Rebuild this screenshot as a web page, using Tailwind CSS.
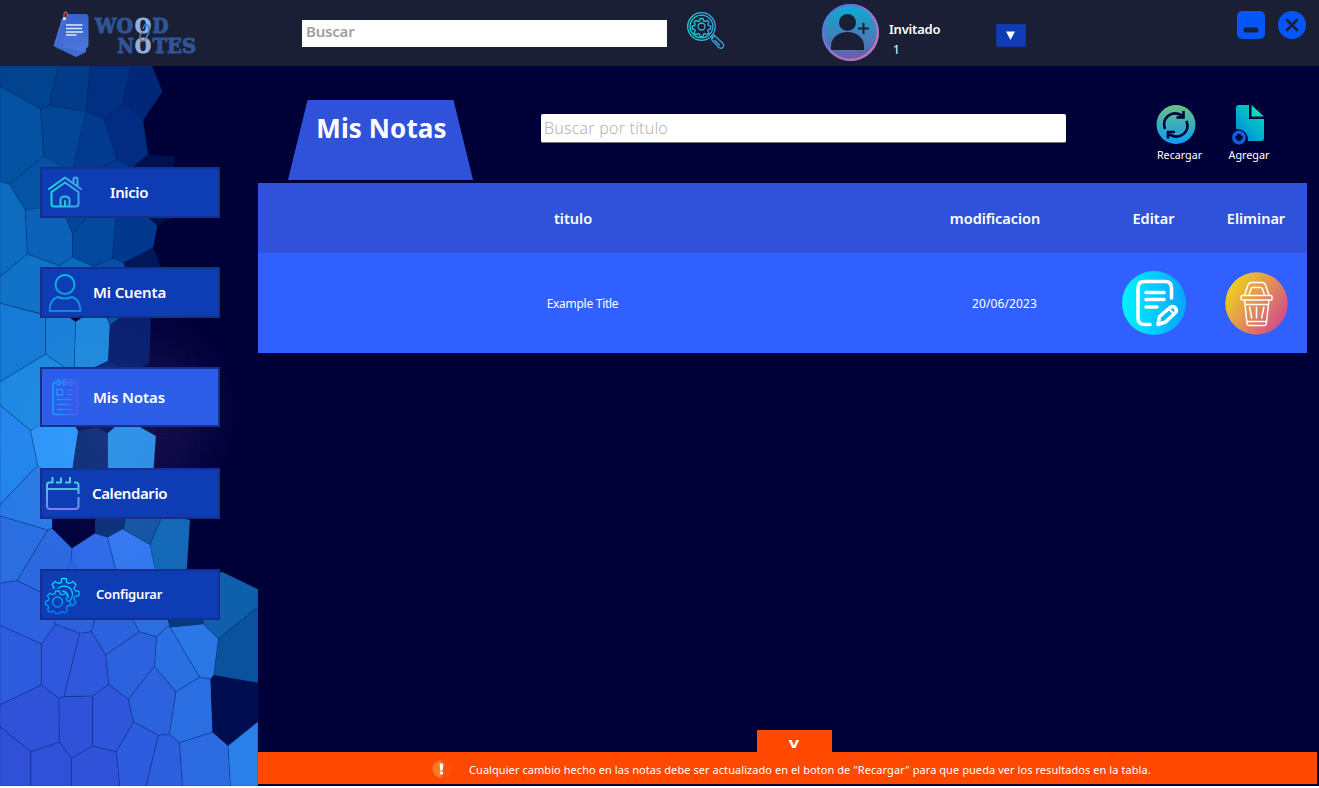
<!DOCTYPE html>
<html lang="es">
<head>
<meta charset="utf-8">
<title>Wood Notes</title>
<script src="https://cdn.jsdelivr.net/npm/@tailwindcss/browser@4"></script>
</head>
<body class="h-[788px] w-[1319px] overflow-hidden bg-white font-['Noto_Sans','Open_Sans',sans-serif] text-white">
<div class="flex h-[786px] w-full flex-col bg-[#000038]">

<header class="flex h-[66px] shrink-0 items-start bg-[#1a1f36]">
  <svg class="ml-[50px] mt-[8px] h-[50px] w-[150px]" viewBox="0 0 150 50">
    <defs><linearGradient id="pg" x1="0" y1="0" x2="0" y2="1"><stop offset="0" stop-color="#3563cc"/><stop offset="1" stop-color="#4b76dc"/></linearGradient></defs>
    <path d="M12 10 L3.500 38 L26 49 L36 44 L37 9Z" fill="#4470d8"/>
    <path d="M13 16 L7 40 L28 47M15 16 L11 40 L31 45" stroke="#3560c0" stroke-width=".7" fill="none"/>
    <path d="M17 6h18q3.500 0 3.500 3v28q0 3-3 3l-3 3.500-20-6z" fill="url(#pg)"/>
    <path d="M16 17h16.500M16 20.500h16M16 24h17M16 27h10.500" stroke="#dfe6f5" stroke-width="1.500"/>
    <rect x="13" y="9" width="3" height="3" fill="#d5dcec"/><path d="M14 10V6q1-3 3-1v4" stroke="#e06068" stroke-width="1.200" fill="none"/>
    <g font-family="'DejaVu Serif',serif" font-weight="700" font-size="21" fill="#2f5596" stroke="#2f5596" stroke-width="1.100">
      <text x="45" y="24.500" textLength="38" lengthAdjust="spacingAndGlyphs">WO</text>
      <text x="85" y="24.500" textLength="16" lengthAdjust="spacingAndGlyphs" fill="#94b0e0" stroke="#94b0e0">O</text>
      <text x="102.500" y="24.500" textLength="16" lengthAdjust="spacingAndGlyphs">D</text>
      <text x="67.500" y="44.800" textLength="16.500" lengthAdjust="spacingAndGlyphs">N</text>
      <text x="85" y="44.800" textLength="16" lengthAdjust="spacingAndGlyphs" fill="#94b0e0" stroke="#94b0e0">O</text>
      <text x="102.500" y="44.800" textLength="43.500" lengthAdjust="spacingAndGlyphs">TES</text>
    </g>
    <path d="M93 21q1-5 4-4t2 6-3 5" stroke="#2085dc" stroke-width="1.700" fill="none"/>
    <path d="M93 24q-3 1-3 5t3 4 4-5" stroke="#76808f" stroke-width="1.500" fill="none"/>
  </svg>
  <div class="ml-[102px] mt-5 h-[27px] w-[365px] bg-white pl-1 text-[15px] leading-[23px] font-semibold tracking-[-0.2px] text-[#a0a0a0]">Buscar</div>
  <svg class="ml-5 mt-[11px] h-[39px] w-[39px]" viewBox="0 0 39 39" fill="none">
    <defs><linearGradient id="mg" gradientUnits="userSpaceOnUse" x1="0" y1="0" x2="39" y2="0"><stop offset="0" stop-color="#16d4d4"/><stop offset="1" stop-color="#4595e4"/></linearGradient></defs>
    <g stroke="url(#mg)" stroke-width="1.300">
      <circle cx="14.500" cy="15.500" r="13.800"/><circle cx="14.500" cy="15.500" r="11.400"/><circle cx="14.500" cy="15.500" r="3.500"/>
      <path d="M13 7.500h3l.5 2.200 1.500.7 2-1.200 2 2-1.200 2 .6 1.300 2.300.5v3l-2.300.5-.6 1.300 1.200 2-2 2-2-1.200-1.500.7-.5 2.200h-3l-.5-2.200-1.500-.7-2 1.200-2-2 1.200-2-.6-1.300-2.300-.5v-3l2.300-.5.6-1.300-1.200-2 2-2 2 1.200 1.500-.7z"/>
      <path d="M24 25l2.500 2.500M26 23l2.500 2.500M28.500 25.500l7.500 7q1.500 2.300-.3 4t-4-.2l-7-7.600q-.2-2 1.300-2.800t2.500-.4zM27.500 29l5.500 5.500"/>
    </g>
  </svg>
  <svg class="ml-[95px] mt-[3px] h-[59px] w-[59px]" viewBox="0 0 59 59">
    <defs><linearGradient id="av" x1="0" y1="0" x2="0" y2="1"><stop offset="0" stop-color="#0aaed0"/><stop offset="1" stop-color="#6a5cab"/></linearGradient>
    <linearGradient id="ar" x1="0" y1="0" x2="1" y2="1"><stop offset="0" stop-color="#1ba0da"/><stop offset=".2" stop-color="#5f70e0"/><stop offset=".6" stop-color="#b66ac8"/><stop offset="1" stop-color="#f268b8"/></linearGradient></defs>
    <circle cx="29.500" cy="29.500" r="28.500" fill="#0ba8d0"/><circle cx="29.500" cy="29.500" r="27.300" fill="url(#av)" stroke="url(#ar)" stroke-width="2.200"/>
    <g fill="#1a1f36"><circle cx="26.500" cy="19.500" r="8.500"/><path d="M10 47V43a16.500 14 0 0 1 33 0v4z"/><path d="M41.500 20h2v4.500H48v2h-4.500V31h-2v-4.500H37v-2h4.500z"/></g>
  </svg>
  <div class="ml-[9px] mt-5 flex w-[107px] flex-col">
    <span class="text-[13px] leading-[18px] font-semibold tracking-[-0.2px]">Invitado</span>
    <span class="mt-[3px] pl-1 text-[12px] leading-[17px]">1</span>
  </div>
  <div class="mt-6 flex h-[23px] w-[30px] items-center justify-center border border-[#14359a] bg-[#0e3cb4] pr-px"><svg class="size-[9px]" viewBox="0 0 9 9"><path d="M0 .5h9L4.500 9z" fill="#fff"/></svg></div>
  <svg class="ml-[210px] mt-[10px] h-[30px] w-[30px]" viewBox="0 0 30 30"><rect x="1" y="1" width="28" height="28" rx="5" fill="#0556f6"/><rect x="7.500" y="17.500" width="15" height="5" rx="2.500" fill="#1a1f36"/></svg>
  <svg class="ml-[11px] mt-[10px] h-[30px] w-[30px]" viewBox="0 0 30 30"><circle cx="15" cy="15" r="14" fill="#0556f6"/><path d="M10 10l10 10M20 10L10 20" stroke="#1a1f36" stroke-width="2.600" stroke-linecap="round"/></svg>
</header>

<div class="flex h-[720px]">
  <aside class="relative h-[720px] w-[258px] shrink-0">
    <!-- mosaic backdrop, drawn on a 3x grid -->
    <svg class="absolute left-0 top-0 h-[720px] w-[330px]" viewBox="0 198 990 2160">
      <defs>
        <radialGradient id="glow"><stop offset="0" stop-color="#120a4a"/><stop offset=".45" stop-color="#0a0644"/><stop offset="1" stop-color="#000038" stop-opacity="0"/></radialGradient>
        <radialGradient id="lt"><stop offset="0" stop-color="#fff" stop-opacity=".04"/><stop offset="1" stop-color="#fff" stop-opacity="0"/></radialGradient>
      </defs>
      <ellipse cx="480" cy="1240" rx="290" ry="380" fill="url(#glow)"/>
      <path d="M468 1308L580 1306 615 1385M550 980L570 1101M475 1275v33" stroke="#080335" stroke-width="2" fill="none"/>
      <path fill="#2c68e0" d="M190 1670H240V1730H190z"/>
      <g stroke="#002868" stroke-opacity=".28" stroke-width="3" stroke-linejoin="round">
        <path fill="#02438f" d="M0 198H175L148 316 122 327 0 259z"/>
        <path fill="#023b8a" d="M175 198H271L258 335 148 316z"/>
        <path fill="#012f82" d="M271 198H393L369 308 312 357 258 335z"/>
        <path fill="#002778" d="M393 198H456L487 275 429 361 369 308z"/>
        <path fill="#0453a3" d="M0 259L122 327 131 468 28 553 0 545z"/>
        <path fill="#034696" d="M122 327L148 316 258 335 219 510 200 520 131 468z"/>
        <path fill="#023a90" d="M258 335L312 357 351 478 305 503 250 530 215 520z"/>
        <path fill="#012c82" d="M312 357L369 308 429 361 444 464 395 505 351 478z"/>
        <path fill="#00104e" stroke="none" d="M395 505L444 464 522 468V650L472 677 445 652z"/>
        <path fill="#0453a5" d="M28 553L131 468 215 520 200 620 76 630z"/>
        <path fill="#013890" d="M351 478L395 505 420 600 305 503z"/>
        <path fill="#0d6bc0" d="M0 545L28 553 76 630 82 762 0 831z"/>
        <path fill="#0c62b8" d="M76 630L185 615 218 704V771L178 797 82 762z"/>
        <path fill="#04479a" d="M190 640H270L218 704z"/>
        <path fill="#034a9e" d="M270 640H349L337 775 280 800 218 771V704z"/>
        <path fill="#02398f" d="M349 640H430L472 677 459 743 371 788 337 775z"/>
        <path fill="#00185a" stroke="none" d="M459 743L490 820H375L371 788z"/>
        <path fill="#1173c8" d="M0 831L82 762 178 797 180 850 130 943 0 910z"/>
        <path fill="#0a6abf" d="M178 797L218 771 280 800 270 850H180z"/>
        <path fill="#0850a5" d="M280 800L337 775 371 788 380 830H280z"/>
        <path fill="#157bd6" d="M0 910L120 941 137 950V1063L0 1145z"/>
        <path fill="#1a80d8" d="M137 940L205 950 227 965 223 1101 205 1110 137 1063z"/>
        <path fill="#1f88dd" d="M227 965L250 950H320L330 975 325 1082 270 1110 223 1101z"/>
        <path fill="#0a55a8" d="M320 940H380L330 975z"/>
        <path fill="#0a2070" stroke="none" d="M363 950H453L448 1090 410 1110H360L325 1082 330 975z"/>
        <path fill="#08287a" stroke="none" d="M275 1106L325 1082 370 1106z"/>
        <path fill="#1d88e2" d="M0 1145L137 1063 205 1110 200 1260 92 1292 0 1215z"/>
        <path fill="#2285ec" d="M0 1215L92 1292 113 1396 0 1514z"/>
        <path fill="#2c95fa" d="M92 1292L130 1270H220L235 1293 216 1420H130L113 1396z"/>
        <path fill="#08155a" stroke="none" d="M220 1270H350L323 1300 290 1281 235 1293z"/>
        <path fill="#0d2c78" stroke="none" d="M235 1293L290 1281 323 1300V1420H216z"/>
        <path fill="#2b8ee5" d="M323 1300L350 1275H410L468 1308 460 1420H323z"/>
        <path fill="#287ae6" d="M0 1514L113 1396 160 1440 157 1585 143 1590 0 1548z"/>
        <path fill="#2a6ee2" d="M0 1548L143 1590 51 1742 0 1750z"/>
        <path fill="#2c68e0" d="M143 1590L157 1585 216 1645 214 1682 190 1730 120 1775 51 1742z"/>
        <path fill="#00003c" stroke="none" d="M157 1540H285V1600L217 1644 157 1586z"/>
        <path fill="#0c2f7a" stroke="none" d="M285 1540H375L370 1588 323 1612 285 1600z"/>
        <path fill="#1555a5" d="M378 1540H490L450 1634 370 1588z"/>
        <path fill="#1468b8" d="M490 1540L570 1560 560 1720H466L450 1634z"/>
        <path fill="#2e6ae8" d="M216 1645L285 1600 323 1612 350 1720H240L214 1682z"/>
        <path fill="#3478f0" d="M323 1612L368 1587 450 1634 468 1720H350z"/>
        <path fill="#2c62e0" d="M0 1750L51 1742 120 1775 167 1873 124 1932 0 1876z"/>
        <path fill="#2d62de" d="M167 1873L150 1840H290L274 1895 239 1900z"/>
        <path fill="#2d62de" d="M290 1840H390L418 1895 317 1965 274 1895z"/>
        <path fill="#2b6ee2" d="M390 1840H500L510 1882 500 1880 470 1911 418 1895z"/>
        <path fill="#063a80" d="M500 1840H630L610 1872 510 1882z"/>
        <path fill="#0f60ac" d="M667 1716L774 1768V1821L655 1917 610 1872 620 1720z"/>
        <path fill="#0a529e" d="M774 1821V2049L641 2026 655 1917z"/>
        <path fill="#2a78e5" d="M510 1882L610 1872 655 1917 641 2026 632 2037 599 2032z"/>
        <path fill="#2a70e2" d="M500 1880L510 1882 599 2032 528 2075 463 1999 470 1911z"/>
        <path fill="#2c62de" d="M418 1895L470 1911 463 1999 385 2098 326 2053 317 1965z"/>
        <path fill="#2f58dc" d="M167 1873L239 1900 192 2090 177 2095 124 2055V1932z"/>
        <path fill="#2f58dc" d="M239 1900L274 1895 317 1965 326 2053 278 2088 192 2090z"/>
        <path fill="#2e5cde" d="M0 1876L124 1932V2055L0 2114z"/>
        <path fill="#3052d8" d="M0 2114L124 2055 177 2095 178 2227 92 2255 0 2180z"/>
        <path fill="#3052d8" d="M177 2095L192 2090 278 2088V2238L214 2275 178 2227z"/>
        <path fill="#2f55da" d="M278 2088L326 2053 385 2098 401 2166 349 2255 278 2238z"/>
        <path fill="#2c62de" d="M385 2098L463 1999 528 2075 508 2203 475 2206 401 2166z"/>
        <path fill="#2a6ee2" d="M528 2075L599 2032 632 2037 638 2197 538 2228 508 2203z"/>
        <path fill="#000d4e" stroke="none" d="M641 2026L774 2049V2165L684 2237 638 2197 632 2037z"/>
        <path fill="#2880e8" d="M684 2237L774 2165V2358H691z"/>
        <path fill="#2b6ae0" d="M638 2197L684 2237 691 2358H547L538 2228z"/>
        <path fill="#2c60de" d="M475 2206L508 2203 538 2228 547 2358H438z"/>
        <path fill="#2e5cde" d="M401 2166L475 2206 438 2358H359L349 2255z"/>
        <path fill="#3052d8" d="M214 2275L278 2238 349 2255 359 2358H214z"/>
        <path fill="#3050d8" d="M92 2255L178 2227 214 2275V2358H92z"/>
        <path fill="#3050d8" d="M0 2180L92 2255V2358H0z"/>
      </g>
      <ellipse cx="300" cy="1320" rx="330" ry="400" fill="url(#lt)"/>
    </svg>
    <nav class="relative ml-10 flex w-[180px] flex-col pt-[101px] font-semibold">
      <a class="flex h-[51px] items-center border-2 border-[#14308c] bg-[#0e3cb4]">
        <svg class="ml-[5px] h-[36px] w-[36px]" viewBox="0 0 36 36" fill="none"><defs><linearGradient id="hg" gradientUnits="userSpaceOnUse" x1="0" y1="0" x2="36" y2="0"><stop offset="0" stop-color="#18dfd8"/><stop offset="1" stop-color="#459be8"/></linearGradient></defs>
        <path stroke="url(#hg)" stroke-width="2" stroke-linejoin="round" stroke-linecap="round" d="M2 14L18 2.500 34 14M4.500 17L18 7.500 31.500 17M4.500 17.500V29q0 2.500 2.500 2.500H29q2.500 0 2.500-2.500V17.500M13.500 31V25q0-3.500 4.500-3.500t4.500 3.500v6M18 26v5M26.500 8V4.500q0-2 2-2t2 2V11"/></svg>
        <span class="ml-[27px] text-[15px] tracking-[-0.4px]">Inicio</span>
      </a>
      <a class="mt-[49px] flex h-[51px] items-center border-2 border-[#14308c] bg-[#0e3cb4]">
        <svg class="ml-[5px] h-[40px] w-[36px]" viewBox="0 0 36 40" fill="none"><defs><linearGradient id="ug" gradientUnits="userSpaceOnUse" x1="0" y1="0" x2="0" y2="40"><stop offset="0" stop-color="#00c4dc"/><stop offset="1" stop-color="#1c80d8"/></linearGradient></defs>
        <path stroke="url(#ug)" stroke-width="2" stroke-linejoin="round" d="M27.500 11.500a9.500 9.500 0 1 1-19 0a9.500 9.500 0 1 1 19 0M11 24q7 3 14 0 8 2 8.500 14H2.500Q3 26 11 24z"/></svg>
        <span class="ml-[10px] text-[15px] tracking-[-0.15px]">Mi Cuenta</span>
      </a>
      <a class="mt-[49px] flex h-[60px] items-center border-2 border-[#14308c] bg-[#2c5eea]">
        <svg class="ml-[9px] h-[38px] w-[28px]" viewBox="0 0 28 38" fill="none"><defs><linearGradient id="ng" gradientUnits="userSpaceOnUse" x1="0" y1="0" x2="28" y2="0"><stop offset="0" stop-color="#0eabff"/><stop offset="1" stop-color="#5a55f0"/></linearGradient></defs>
        <path stroke="url(#ng)" stroke-width="1.400" d="M6 4.500H4.500Q2 4.500 2 6.500V34q0 2.500 2.500 2.500H23.500q2.500 0 2.500-2.500V6.500q0-2-2-2H22.500M9 4.500H12M15 4.500H18M6.500 2h2.500v5h-2.500zM12.500 2h2.500v5h-2.500zM18.500 2h2.500v5h-2.500zM6 11.500h5.500v5.500H6zM16 12h6M16 16.500h6M6 21.500h16M6 26.500h16M6 31.500h16"/></svg>
        <span class="ml-[14px] text-[15px] tracking-[-0.1px]">Mis Notas</span>
      </a>
      <a class="mt-[41px] flex h-[51px] items-center border-2 border-[#14308c] bg-[#0e3cb4]">
        <svg class="ml-[3px] h-[36px] w-[36px]" viewBox="0 0 36 36" fill="none"><defs><linearGradient id="cg" gradientUnits="userSpaceOnUse" x1="0" y1="0" x2="0" y2="36"><stop offset="0" stop-color="#3cdce0"/><stop offset="1" stop-color="#8878f4"/></linearGradient></defs>
        <path stroke="url(#cg)" stroke-width="2" stroke-linejoin="round" d="M7.500 1v5.500H4Q2 6.500 2 9V30q0 3 3 3H30.500q3 0 3-3V21M33.500 18V9q0-2.500-2.500-2.500h-2M2 13H33.500M11 6.500h5V1.500M20 6.500h5V1"/></svg>
        <span class="ml-[11px] text-[15px] tracking-[-0.4px]">Calendario</span>
      </a>
      <a class="mt-[50px] flex h-[51px] items-center border-2 border-[#14308c] bg-[#0e3cb4]">
        <svg class="ml-[2px] h-[38px] w-[38px]" viewBox="0 0 38 38" fill="none"><defs><linearGradient id="gg" gradientUnits="userSpaceOnUse" x1="0" y1="0" x2="0" y2="38"><stop offset="0" stop-color="#00e8ec"/><stop offset="1" stop-color="#0874f4"/></linearGradient></defs>
        <g stroke="url(#gg)" stroke-width="1.400" stroke-linejoin="round">
        <path d="M9 13l1-1.500-2-3L11 5.500l3.500 2L17 6.500 18 2.500h4l1 4 2.500 1L29 5.500 32 8.500l-2 3.500 1 2.500 4 1v4l-4 1-1 2.500 2 3.500-3 3-2.500-1.500"/>
        <path d="M14 12.500q2.500-2.500 6.500-2.500 8 1 8 8.500 0 4-3.500 6.500M18 15q6 0 6.500 7"/>
        <path d="M11.500 15h4l.8 3 2.200 1 2.800-1.800 2.700 2.700-1.800 2.800 1 2.200 3 .8v3.500l-3 .8-1 2.200 1.300 2.300-2.500 2.500-2.600-1.500-2.200 1-.8 1h-4l-.8-1.500-2.200-1-2.800 1.200L3.500 33.500l1.300-2-1-2L1.500 28.500V25.500l2.600-1L5 22.500 3.500 19.500 6 17.200l2.700 1.500 2-.8z"/>
        <circle cx="13.500" cy="26" r="5"/></g></svg>
        <span class="ml-[14px] text-[13px] tracking-[-0.2px]">Configurar</span>
      </a>
    </nav>
  </aside>

  <main class="relative flex h-[720px] flex-1 flex-col">
    <div class="flex h-[117px] items-start">
      <div class="ml-[29px] mt-[34px] flex h-[80px] w-[187px] justify-center bg-[#3052da] pt-[9px] pl-[2px] [clip-path:polygon(11%_0,89%_0,99.500%_100%,0.500%_100%)]">
        <h1 class="text-[26px] leading-[38px] font-bold tracking-[0.1px]">Mis Notas</h1>
      </div>
      <div class="ml-[67px] mt-12 h-[29px] w-[525px] rounded-[2px] border-b border-[#777] bg-white pl-[3px] text-[16px] leading-[28px] font-light tracking-[0.2px] text-[#b4b4b4]">Buscar por título</div>
      <div class="ml-[83px] mt-[37px] flex w-[60px] flex-col items-center">
        <svg class="mr-[6px] h-[42px] w-[42px]" viewBox="0 0 42 42" fill="none"><defs><linearGradient id="rg" x1="0" y1="0" x2="0" y2="1"><stop offset="0" stop-color="#6cc080"/><stop offset="1" stop-color="#0a9cf8"/></linearGradient></defs>
        <circle cx="21" cy="21.500" r="19.500" fill="url(#rg)"/><g stroke="#000038" stroke-width="2.600"><path d="M10 26Q7 18 13 13t14-.5M31.500 18q3 8-3 13t-14 .5M21.500 14.500h7V8M20 29h-7V35.500"/></g></svg>
        <span class="mt-[1px] pl-px text-[10.700px] leading-[18px]">Recargar</span>
      </div>
      <div class="ml-[10px] mt-[37px] flex w-[60px] flex-col items-center">
        <svg class="mr-[3px] h-[42px] w-[34px]" viewBox="0 0 34 42" fill="none"><defs><linearGradient id="fg" x1=".8" y1="0" x2="0" y2="1"><stop offset="0" stop-color="#00dcb8"/><stop offset="1" stop-color="#0080e0"/></linearGradient></defs>
        <path fill="url(#fg)" d="M8 2H18V16H33V35q0 3-3 3H17Q17 26 5 26V5q0-3 3-3z"/><path fill="#00dcb8" d="M20.500 2L33 13.500H20.500z"/><circle cx="8" cy="34.500" r="6.900" fill="#0860dc"/><path stroke="#000038" stroke-width="3.500" d="M8 31v7M4.500 34.500h7"/></svg>
        <span class="mt-[1px] text-[10.800px] leading-[18px]">Agregar</span>
      </div>
    </div>

    <section class="w-[1049px]">
      <div class="grid h-[70px] grid-cols-[630px_214px_103px_102px] items-center bg-[#3052da] pt-[2px] text-center text-[14.500px] font-semibold">
        <span>titulo</span><span class="tracking-[-0.05px]">modificacion</span><span>Editar</span><span>Eliminar</span>
      </div>
      <div class="grid h-[100px] grid-cols-[648px_197px_102px_102px] items-center justify-items-center bg-[#3060ff] text-[12px]">
        <span class="pt-[2px] pl-px tracking-[-0.28px]">Example Title</span><span class="pt-[2px] tracking-[0.12px]">20/06/2023</span>
        <svg class="h-[64px] w-[64px]" viewBox="0 0 64 64" fill="none"><defs><linearGradient id="eg"><stop offset="0" stop-color="#00f4ff"/><stop offset="1" stop-color="#08a4ff"/></linearGradient></defs>
        <circle cx="32" cy="32" r="32" fill="url(#eg)"/><g stroke="#fff" stroke-width="3.600" stroke-linecap="round" stroke-linejoin="round"><path d="M49.500 27V17q0-6.500-6.500-6.500H22.500Q16 10.500 16 17V47q0 6.500 6.500 6.500H28M24 21.500H42M24 28.500H42M24 36H35M36 53.500l1.500-8L48 36.500q3-2 5 0t1 4.500L43.500 51z"/><path d="M47 38l4.500 4.500" stroke-width="2"/></g></svg>
        <svg class="h-[63px] w-[63px]" viewBox="0 0 63 63" fill="none"><defs><linearGradient id="tg" x1="0" y1=".15" x2="1" y2=".85"><stop offset="0" stop-color="#f2dc10"/><stop offset=".5" stop-color="#e29055"/><stop offset="1" stop-color="#cf3f94"/></linearGradient></defs>
        <circle cx="31.500" cy="31.500" r="31.200" fill="url(#tg)"/><path stroke="#fff" stroke-width="1.500" stroke-linejoin="round" d="M17 23.500H46q1 0 1 1V27q0 1-1 1H17q-1 0-1-1V24.500q0-1 1-1zM19.500 23L23 13Q24 10.500 26 10.500H37.500q2 0 3 2.500L44 23M24 23L26 17q.5-1.500 2-1.500H35.500q1.500 0 2 1.500L39.500 23M19.500 28L22 51.500Q22.300 53.500 24 53.500H39.500q1.500 0 1.800-2L44 28M20.500 32.500H43.500M22 49.500H41.500M24.500 34.500l2.300 12M31.500 34.500v12M39 34.500L36.500 46.500"/></svg>
      </div>
    </section>

    <footer class="mt-auto flex flex-col pb-[2px]">
      <div class="ml-[499px] flex h-[22px] w-[75px] justify-center bg-[#ff4800] pr-[2px] pt-[4px] text-[14px] leading-[18px] font-bold"><span class="scale-x-130">v</span></div>
      <div class="mr-[2px] flex h-8 items-center bg-[#ff4800] pt-1 text-[11px]">
        <svg class="ml-[174px] size-[20px]" viewBox="0 0 20 20"><circle cx="10" cy="9" r="9" fill="#ff5210"/><path d="M9.500 0a9 9 0 0 0 0 18z" fill="#ff7a20"/><path d="M7.700 3.500h3.600L10.800 10.500H8.200z" fill="#fff"/><circle cx="9.500" cy="13" r="1.700" fill="#fff"/></svg>
        <span class="ml-[17px] tracking-[0.065px] whitespace-nowrap">Cualquier cambio hecho en las notas debe ser actualizado en el boton de "Recargar" para que pueda ver los resultados en la tabla.</span>
      </div>
    </footer>
  </main>
</div>
</div>
</body>
</html>
